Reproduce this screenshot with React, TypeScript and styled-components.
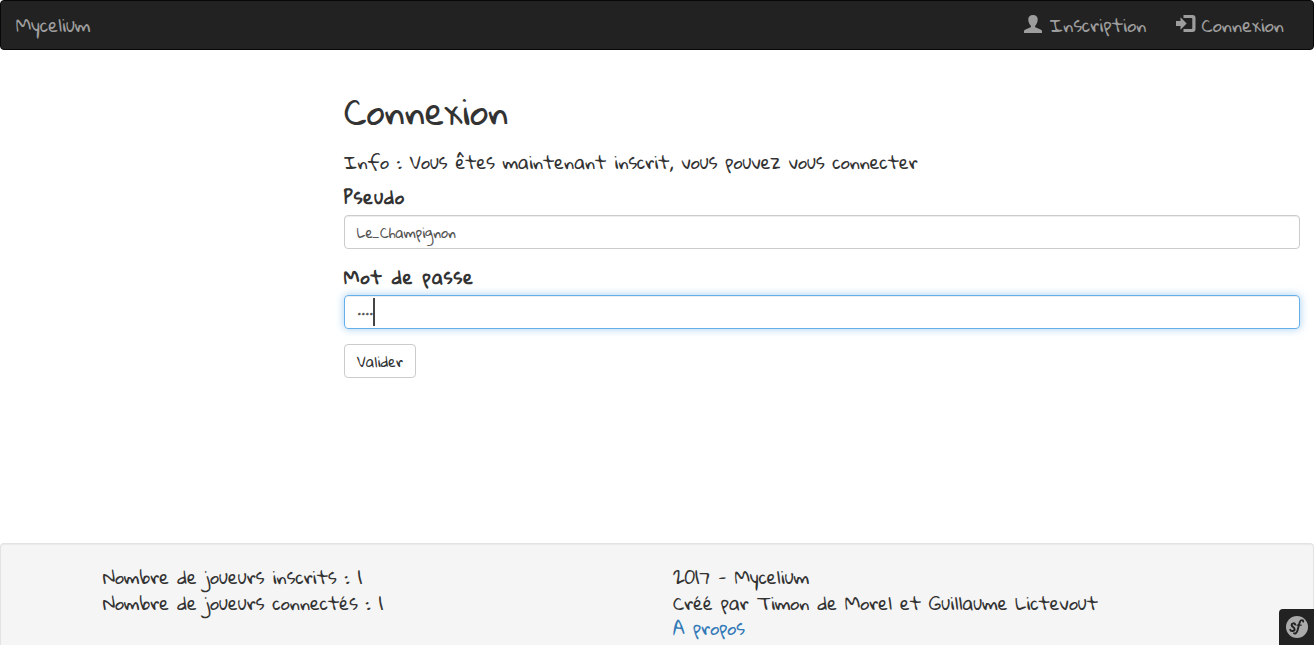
import React from "react";
import styled, { createGlobalStyle } from "styled-components";

const GlobalStyle = createGlobalStyle`
  *, *::before, *::after { box-sizing: border-box; }
  body {
    margin: 0;
    overflow: hidden;
    background: #fff;
    color: #333;
    font-family: "Gloria Hallelujah", "Indie Flower", Lato, sans-serif;
    font-size: 18px;
    line-height: 26px;
  }
`;

const Page = styled.div`
  height: 645px;
  display: flex;
  flex-direction: column;
`;

const Navbar = styled.nav`
  height: 50px;
  flex: none;
  display: flex;
  justify-content: space-between;
  align-items: center;
  padding: 0 29px 1px 15px;
  color: #9d9d9d;
  background: #222;
  border: 1px solid #080808;
  border-radius: 4px;
`;

const Brand = styled.span`
  letter-spacing: -0.08px;
`;

const NavLinks = styled.div`
  display: flex;
  gap: 30px;
`;

const NavLink = styled.a<{ $gap: number }>`
  display: flex;
  align-items: center;
  gap: ${(p) => p.$gap}px;
  color: #9d9d9d;
  text-decoration: none;

  svg { margin-top: -2px; }
`;

const Main = styled.main`
  flex: 1;
  display: flex;
  flex-direction: column;
  align-items: stretch;
  padding: 39px 14px 0 344px;
`;

const Title = styled.h1`
  margin: 0 0 18px;
  font-size: 36px;
  font-weight: 400;
  line-height: 42px;
  letter-spacing: -0.1px;
`;

const Info = styled.p`
  margin: 0 0 9px;
  letter-spacing: -0.08px;
`;

const Label = styled.label`
  margin-bottom: 5px;
  font-weight: 700;
  letter-spacing: 1px;
`;

const Field = styled.div<{ $focused?: boolean }>`
  height: 34px;
  flex: none;
  display: flex;
  align-items: center;
  margin-bottom: 15px;
  padding: 0 12px;
  color: #555;
  font-size: 14px;
  letter-spacing: -0.05px;
  border: 1px solid ${(p) => (p.$focused ? "#66afe9" : "#ccc")};
  border-radius: 4px;
  box-shadow: inset 0 1px 1px rgba(0, 0, 0, 0.075)
    ${(p) => (p.$focused ? ", 0 0 8px rgba(102, 175, 233, 0.6)" : "")};
`;

const Secret = styled.span`
  letter-spacing: -0.25px;
  -webkit-text-stroke: 0.5px #555;
`;

const Caret = styled.span`
  width: 2px;
  height: 28px;
  background: #444;
`;

const Submit = styled.button`
  width: 72px;
  height: 34px;
  padding: 0 0 1px;
  font: inherit;
  font-size: 14px;
  color: #333;
  background: #fff;
  border: 1px solid #ccc;
  border-radius: 4px;
`;

const Footer = styled.footer`
  height: 102px;
  flex: none;
  display: grid;
  grid-template-columns: 570px 1fr;
  align-items: start;
  padding: 20px 0 0 102px;
  line-height: 25.7143px;
  background: #f5f5f5;
  border: 1px solid #e3e3e3;
  border-bottom: 0;
  border-radius: 4px 4px 0 0;
  box-shadow: inset 0 1px 1px rgba(0, 0, 0, 0.05);
`;

const FooterColumn = styled.div<{ $spacing?: number }>`
  display: flex;
  flex-direction: column;
  letter-spacing: ${(p) => p.$spacing ?? 0}px;
`;

const FooterLink = styled.a`
  color: #337ab7;
  text-decoration: none;
`;

const DebugBadge = styled.div`
  position: fixed;
  right: 0;
  bottom: 0;
  width: 35px;
  height: 36px;
  display: grid;
  place-items: center;
  background: #222;
  border-radius: 4px 0 0 0;
`;

const UserIcon = () => (
  <svg width="18" height="18" viewBox="0 0 18 18" fill="#9d9d9d">
    <path d="M9 0C6 0 4.300 1.800 4.300 4.300c0 2.800.9 4.800 2.300 6.100.6.7.4 1.600-.5 2.100L1.500 14.500C.4 15 0 15.500 0 16.300V18h18v-1.700c0-.8-.4-1.300-1.500-1.800l-4.600-2c-.9-.5-1.100-1.400-.5-2.100 1.400-1.300 2.300-3.300 2.300-6.100C13.700 1.800 12 0 9 0z" />
  </svg>
);

const LoginIcon = () => (
  <svg width="20" height="17" viewBox="0 0 20 17" fill="#9d9d9d">
    <path d="M0 6h4.500V2.200L10.700 8.500l-6.200 6.300V11H0z" />
    <path d="M7.500 0h9A3 3 0 0 1 19.500 3v11a3 3 0 0 1-3 3h-9v-3h8a.8.8 0 0 0 .8-.8V3.800a.8.8 0 0 0-.8-.8h-8z" />
  </svg>
);

const SymfonyIcon = () => (
  <svg width="22" height="22" viewBox="0 0 22 22">
    <circle cx="11" cy="11" r="11" fill="#aaa" />
    <g fill="none" stroke="#222" strokeLinecap="round">
      <path d="M9.200 8.600C8.800 6.800 5.600 7 5.600 9c0 1.900 3 2.200 3 4.200 0 2.300-3.900 2.500-4.300.6" strokeWidth="2" />
      <path d="M17.200 5.600c.2-2-2.400-2.100-3.300.2C12.900 8.300 12.400 12 11.300 15c-.7 2-2.100 3-3.300 2.300" strokeWidth="1.900" />
      <path d="M11 9.200h4.200" strokeWidth="1.200" />
    </g>
  </svg>
);

export default function App() {
  return (
    <Page>
      <GlobalStyle />
      <Navbar>
        <Brand>Mycelium</Brand>
        <NavLinks>
          <NavLink $gap={8}><UserIcon /><span>Inscription</span></NavLink>
          <NavLink $gap={5}><LoginIcon /><span>Connexion</span></NavLink>
        </NavLinks>
      </Navbar>
      <Main>
        <Title>Connexion</Title>
        <Info>Info : Vous êtes maintenant inscrit, vous pouvez vous connecter</Info>
        <Label>Pseudo</Label>
        <Field>Le_Champignon</Field>
        <Label>Mot de passe</Label>
        <Field $focused><Secret>····</Secret><Caret /></Field>
        <Submit>Valider</Submit>
      </Main>
      <Footer>
        <FooterColumn $spacing={-0.03}>
          <div>Nombre de joueurs inscrits : 1</div>
          <div>Nombre de joueurs connectés : 1</div>
        </FooterColumn>
        <FooterColumn $spacing={-0.07}>
          <div>2017 - Mycelium</div>
          <div>Créé par Timon de Morel et Guillaume Lictevout</div>
          <FooterLink>A propos</FooterLink>
        </FooterColumn>
      </Footer>
      <DebugBadge><SymfonyIcon /></DebugBadge>
    </Page>
  );
}
